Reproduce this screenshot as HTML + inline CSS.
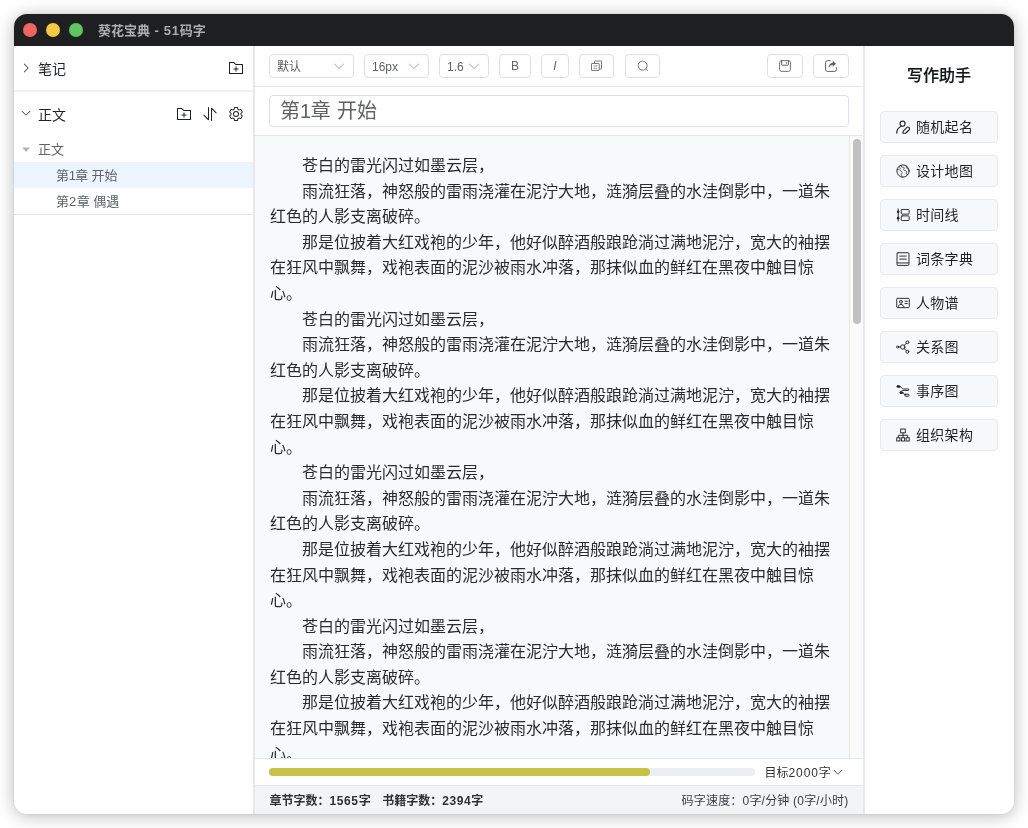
<!DOCTYPE html>
<html lang="zh-CN">
<head>
<meta charset="utf-8">
<title>葵花宝典 - 51码字</title>
<style>
*{box-sizing:border-box;margin:0;padding:0}
html,body{width:1028px;height:828px;background:#fff;overflow:hidden}
body{font-family:"Liberation Sans","Noto Sans CJK SC",sans-serif;position:relative;color:#303133;-webkit-font-smoothing:antialiased}
.win{position:absolute;left:14px;top:14px;width:1000px;height:800px;border-radius:13px;background:#fff;
 box-shadow:0 0 1px rgba(0,0,0,.3),0 2px 17px rgba(0,0,0,.28);}
.clip{position:absolute;inset:0;border-radius:13px;overflow:hidden;will-change:transform}
.titlebar{position:absolute;left:0;top:0;width:1000px;height:32px;background:#1d1f21}
.tl{position:absolute;top:9px;width:14px;height:14px;border-radius:50%}
.tl.r{left:9px;background:#ee6562}.tl.y{left:32px;background:#f4c942}.tl.g{left:55px;background:#60c461}
.wtitle{position:absolute;left:84px;top:0;height:32px;line-height:33px;font-size:13px;font-weight:700;color:#adadad;white-space:nowrap}
.wtitle i{font-style:normal;letter-spacing:0.75px}
/* sidebar */
.side{position:absolute;left:0;top:32px;width:239px;height:768px;background:#fff}
.sdiv{position:absolute;left:239px;top:32px;width:2px;height:768px;background:#e7e8ee}
.sec{position:absolute;left:0;width:239px;height:45px}
.sec .lbl{position:absolute;left:24px;top:1px;height:45px;line-height:45px;font-size:14px;color:#1f2225}
.hline{position:absolute;left:0;width:239px;height:2px;background:#eff0f5}
.ico{position:absolute;display:block}
.tree{position:absolute;left:0;top:90px;width:239px}
.trow{position:relative;height:26px;line-height:26px;font-size:13px;color:#606266;white-space:nowrap}
.trow.sel{background:#ecf5ff}
.trow i{font-style:normal}.trow{word-spacing:-0.3px}.d1{letter-spacing:-0.7px;margin-left:-0.4px}.d2{letter-spacing:0.6px}
/* editor */
.main{position:absolute;left:241px;top:32px;width:608px;height:768px;background:#fff}
.tbar{position:absolute;left:0;top:0;width:608px;height:41px;border-bottom:1px solid #e6e8f0}
.ctl{position:absolute;top:8px;height:24px;border:1px solid #dcdfe6;border-radius:4px;background:#fff;font-size:12px;color:#606266;line-height:22px}
.ctl span{position:absolute;left:7px;top:0.5px}
.titlebox{position:absolute;left:14px;top:49px;width:580px;height:32px;border:1px solid #dcdfe6;border-radius:4px;background:#fff;font-size:20px;line-height:31px;color:#606266;padding-left:10px;white-space:nowrap;word-spacing:0.6px}
.tline{position:absolute;left:0;top:89px;width:608px;height:1px;background:#e4e7ed}
.ed{position:absolute;left:0;top:90px;width:594px;height:622px;background:#f8f9fb;overflow:hidden}
.ed .txt{position:absolute;left:15px;top:17px;width:565px;font-size:16px;line-height:25.6px;color:#2a2b2e}
.ed p{text-indent:2em}
.sb{position:absolute;left:594px;top:90px;width:14px;height:622px;background:#fafafa;border-left:1px solid #e8e8e8}
.sb i{position:absolute;left:3px;top:3px;width:8px;height:185px;border-radius:4px;background:#c1c1c1}
.pline{position:absolute;left:0;top:712px;width:608px;height:1px;background:#e4e7ed}
.prog{position:absolute;left:14px;top:722px;width:486px;height:8px;border-radius:4px;background:#ebeef5}
.prog i{position:absolute;left:0;top:0;width:380.7px;height:8px;border-radius:4px;background:#c9c046}
.goal{position:absolute;left:509.5px;top:714px;height:27px;line-height:27px;font-size:12px;color:#303133;white-space:nowrap}
.status{position:absolute;left:0;top:739px;width:608px;height:29px;background:#f3f4f6;border-top:1px solid #e4e7ed;font-size:12px;line-height:30px;color:#303133;white-space:nowrap}
.status b{position:absolute;left:14.5px;top:0;font-weight:700}
.status span{position:absolute;right:14.5px;top:0;letter-spacing:0.2px;color:#3a3c40}
.status i{font-style:normal;letter-spacing:0.6px}.status u{display:inline-block;width:11.5px;text-decoration:none}
.mdiv{position:absolute;left:849px;top:32px;width:2px;height:768px;background:#e6e8ef}
/* right */
.right{position:absolute;left:851px;top:32px;width:149px;height:768px;background:#fff}
.right h3{position:absolute;left:-0.5px;top:18px;width:149px;text-align:center;font-size:16px;line-height:24px;font-weight:500;color:#141517;-webkit-text-stroke:0.2px #141517}
.rb{position:absolute;left:15px;width:118px;height:32px;border:1px solid #e7e9ee;border-radius:4px;background:#f7f8fa;font-size:14px;line-height:30px;color:#1f2225;white-space:nowrap}
.rb span{position:absolute;left:35px;top:0;letter-spacing:0.3px}
.rb svg{position:absolute;left:15px;top:8px}
</style>
</head>
<body>
<div class="win"><div class="clip">
 <div class="titlebar">
  <div class="tl r"></div><div class="tl y"></div><div class="tl g"></div>
  <div class="wtitle">葵花宝典<i> - 51</i>码字</div>
 </div>

 <div class="side">
  <div class="sec" style="top:0"><div class="lbl">笔记</div></div>
  <div class="hline" style="top:44px"></div>
  <div class="sec" style="top:46px"><div class="lbl">正文</div></div>
  <svg class="ico" style="left:6.2px;top:15.6px" width="12" height="12" viewBox="0 0 1024 1024"><path fill="#1f2225" d="M340.864 149.312a30.592 30.592 0 0 0 0 42.752L652.736 512 340.864 831.872a30.592 30.592 0 0 0 0 42.752 29.12 29.12 0 0 0 41.728 0L714.24 534.336a32 32 0 0 0 0-44.672L382.592 149.376a29.12 29.12 0 0 0-41.728 0z"/></svg>
  <svg class="ico" style="left:214px;top:14.2px" width="16" height="16" viewBox="0 0 1024 1024"><path fill="#1f2225" d="M128 192v640h768V320H485.76L357.504 192H128zm-32-64h287.872l128.384 128H928a32 32 0 0 1 32 32v576a32 32 0 0 1-32 32H96a32 32 0 0 1-32-32V160a32 32 0 0 1 32-32zm384 416V416h64v128h128v64H544v128h-64V608H352v-64h128z"/></svg>
  <svg class="ico" style="left:6px;top:61.4px" width="12" height="12" viewBox="0 0 1024 1024"><path fill="#1f2225" d="M831.872 340.864 512 652.672 192.128 340.864a30.592 30.592 0 0 0-42.752 0 29.12 29.12 0 0 0 0 41.6L489.664 714.24a32 32 0 0 0 44.672 0l340.288-331.712a29.12 29.12 0 0 0 0-41.728 30.592 30.592 0 0 0-42.752 0z"/></svg>
  <svg class="ico" style="left:162px;top:59.5px" width="16" height="16" viewBox="0 0 1024 1024"><path fill="#1f2225" d="M128 192v640h768V320H485.76L357.504 192H128zm-32-64h287.872l128.384 128H928a32 32 0 0 1 32 32v576a32 32 0 0 1-32 32H96a32 32 0 0 1-32-32V160a32 32 0 0 1 32-32zm384 416V416h64v128h128v64H544v128h-64V608H352v-64h128z"/></svg>
  <svg class="ico" style="left:188px;top:59.5px" width="16" height="16" viewBox="0 0 1024 1024"><path fill="#1f2225" d="M384 96a32 32 0 0 1 64 0v786.752a32 32 0 0 1-54.592 22.656L95.936 608a32 32 0 0 1 0-45.312h.128a32 32 0 0 1 45.184 0L384 805.632V96zm192 45.248a32 32 0 0 1 54.592-22.592L928.064 416a32 32 0 0 1 0 45.312h-.128a32 32 0 0 1-45.184 0L640 218.496V928a32 32 0 1 1-64 0V141.248z"/></svg>
  <svg class="ico" style="left:214px;top:59.5px" width="16" height="16" viewBox="0 0 1024 1024"><path fill="#1f2225" d="M600.704 64a32 32 0 0 1 30.464 22.208l35.2 109.376c14.784 7.232 28.928 15.36 42.432 24.512l112.384-24.192a32 32 0 0 1 34.432 15.36L944.32 364.8a32 32 0 0 1-4.032 37.504l-77.12 85.12a357.12 357.12 0 0 1 0 49.024l77.12 85.248a32 32 0 0 1 4.032 37.504l-88.704 153.6a32 32 0 0 1-34.432 15.296L708.8 803.904c-13.44 9.088-27.648 17.28-42.368 24.512l-35.264 109.376A32 32 0 0 1 600.704 960H423.296a32 32 0 0 1-30.464-22.208L357.696 828.48a351.616 351.616 0 0 1-42.56-24.64l-112.32 24.256a32 32 0 0 1-34.432-15.36L79.68 659.2a32 32 0 0 1 4.032-37.504l77.12-85.248a357.12 357.12 0 0 1 0-48.896l-77.12-85.248A32 32 0 0 1 79.68 364.8l88.704-153.6a32 32 0 0 1 34.432-15.296l112.32 24.256c13.568-9.152 27.776-17.408 42.56-24.64l35.2-109.312A32 32 0 0 1 423.232 64H600.64zm-23.424 64H446.72l-36.352 113.088-24.512 11.968a294.113 294.113 0 0 0-34.816 20.096l-22.656 15.36-116.224-25.088-65.28 113.152 79.68 88.192-1.92 27.136a293.12 293.12 0 0 0 0 40.192l1.92 27.136-79.808 88.192 65.344 113.152 116.224-25.024 22.656 15.296a294.113 294.113 0 0 0 34.816 20.096l24.512 11.968L446.72 896h130.688l36.48-113.152 24.448-11.904a288.282 288.282 0 0 0 34.752-20.096l22.592-15.296 116.288 25.024 65.28-113.152-79.744-88.192 1.92-27.136a293.12 293.12 0 0 0 0-40.256l-1.92-27.136 79.808-88.128-65.344-113.152-116.288 24.96-22.592-15.232a287.616 287.616 0 0 0-34.752-20.096l-24.448-11.904L577.344 128zM512 320a192 192 0 1 1 0 384 192 192 0 0 1 0-384zm0 64a128 128 0 1 0 0 256 128 128 0 0 0 0-256z"/></svg>
  <svg class="ico" style="left:5.8px;top:96.5px" width="12" height="12" viewBox="0 0 1024 1024"><path fill="#b0b3ba" d="m192 384 320 384 320-384z"/></svg>
  <div class="tree">
   <div class="trow"><span style="position:absolute;left:24px;top:1px">正文</span></div>
   <div class="trow sel"><span style="position:absolute;left:42px;top:1px">第<i class="d1">1</i>章 开始</span></div>
   <div class="trow"><span style="position:absolute;left:42px;top:1px">第<i class="d2">2</i>章 偶遇</span></div>
  </div>
  <div class="hline" style="top:168px;height:1px;background:#e5e7ec"></div>
 </div>
 <div class="sdiv"></div>

 <div class="main">
  <div class="tbar">
   <div class="ctl" style="left:14px;width:85px"><span>默认</span><svg class="ico" style="right:7px;top:3.5px" width="14" height="14" viewBox="0 0 1024 1024"><path fill="#a8abb2" d="M831.872 340.864 512 652.672 192.128 340.864a30.592 30.592 0 0 0-42.752 0 29.12 29.12 0 0 0 0 41.6L489.664 714.24a32 32 0 0 0 44.672 0l340.288-331.712a29.12 29.12 0 0 0 0-41.728 30.592 30.592 0 0 0-42.752 0z"/></svg></div>
   <div class="ctl" style="left:109px;width:65px"><span>16px</span><svg class="ico" style="right:7px;top:3.5px" width="14" height="14" viewBox="0 0 1024 1024"><path fill="#a8abb2" d="M831.872 340.864 512 652.672 192.128 340.864a30.592 30.592 0 0 0-42.752 0 29.12 29.12 0 0 0 0 41.6L489.664 714.24a32 32 0 0 0 44.672 0l340.288-331.712a29.12 29.12 0 0 0 0-41.728 30.592 30.592 0 0 0-42.752 0z"/></svg></div>
   <div class="ctl" style="left:184px;width:50px"><span>1.6</span><svg class="ico" style="right:7px;top:3.5px" width="14" height="14" viewBox="0 0 1024 1024"><path fill="#a8abb2" d="M831.872 340.864 512 652.672 192.128 340.864a30.592 30.592 0 0 0-42.752 0 29.12 29.12 0 0 0 0 41.6L489.664 714.24a32 32 0 0 0 44.672 0l340.288-331.712a29.12 29.12 0 0 0 0-41.728 30.592 30.592 0 0 0-42.752 0z"/></svg></div>
   <div class="ctl" style="left:244px;width:32px;text-align:center">B</div>
   <div class="ctl" style="left:286px;width:27.7px;text-align:center"><em>I</em></div>
   <div class="ctl" style="left:323.7px;width:35.6px"><svg class="ico" style="left:11.3px;top:5px" width="12" height="12" viewBox="0 0 12 12" fill="none" stroke="#606266" stroke-width="0.85" stroke-linejoin="round" stroke-linecap="butt"><rect x="0.5" y="3.5" width="7.7" height="7" rx="0.5"/><path d="M3.500 3.400V1.500a0.5 0.5 0 0 1 0.5-0.5H10a0.5 0.5 0 0 1 0.5 0.5V8.500a0.5 0.5 0 0 1-0.5 0.5H8.400"/><path d="M2.500 6h3.700M2.500 8.300h3.700" stroke-width="0.7"/></svg></div>
   <div class="ctl" style="left:369.6px;width:35.6px"><svg class="ico" style="left:11px;top:5px" width="12" height="12" viewBox="0 0 1024 1024"><path fill="#606266" d="m795.904 750.72 124.992 124.928a32 32 0 0 1-45.248 45.248L750.656 795.904a416 416 0 1 1 45.248-45.248zM480 832a352 352 0 1 0 0-704 352 352 0 0 0 0 704z"/></svg></div>
   <div class="ctl" style="left:512px;width:36px"><svg class="ico" style="left:11px;top:5px" width="12" height="12" viewBox="0 0 12 12" fill="none" stroke="#606266" stroke-width="1" stroke-linejoin="round" stroke-linecap="round"><rect x="0.6" y="0.6" width="10.8" height="10.8" rx="2" stroke-width="0.9"/><path d="M2.6 0.8V4.4a0.8 0.8 0 0 0 0.8 0.8H8.6a0.8 0.8 0 0 0 0.8-0.8V0.8"/><path d="M7.4 2.3v1.4" stroke-width="0.8"/></svg></div>
   <div class="ctl" style="left:558px;width:36px"><svg class="ico" style="left:11px;top:5px" width="12" height="12" viewBox="0 0 12 12" fill="none" stroke="#606266" stroke-width="1" stroke-linejoin="round" stroke-linecap="round"><path d="M5.2 0.7H2.4a1.8 1.8 0 0 0-1.8 1.8V9.6a1.8 1.8 0 0 0 1.8 1.8H9.6a1.8 1.8 0 0 0 1.8-1.8V7.6"/><path d="M8 1.400l2.900 2.400-2.900 2.400V4.800C6.300 4.800 4.800 5.600 3.800 7.200 4.100 4.700 5.700 3 8 2.800z" fill="#606266" stroke-width="0.5"/></svg></div>
  </div>
  <div class="titlebox">第<i style="font-style:normal;letter-spacing:-0.3px">1</i>章 开始</div>
  <div class="tline"></div>
  <div class="ed"><div class="txt">
<p>苍白的雷光闪过如墨云层，</p>
<p>雨流狂落，神怒般的雷雨浇灌在泥泞大地，涟漪层叠的水洼倒影中，一道朱红色的人影支离破碎。</p>
<p>那是位披着大红戏袍的少年，他好似醉酒般踉跄淌过满地泥泞，宽大的袖摆在狂风中飘舞，戏袍表面的泥沙被雨水冲落，那抹似血的鲜红在黑夜中触目惊心。</p>
<p>苍白的雷光闪过如墨云层，</p>
<p>雨流狂落，神怒般的雷雨浇灌在泥泞大地，涟漪层叠的水洼倒影中，一道朱红色的人影支离破碎。</p>
<p>那是位披着大红戏袍的少年，他好似醉酒般踉跄淌过满地泥泞，宽大的袖摆在狂风中飘舞，戏袍表面的泥沙被雨水冲落，那抹似血的鲜红在黑夜中触目惊心。</p>
<p>苍白的雷光闪过如墨云层，</p>
<p>雨流狂落，神怒般的雷雨浇灌在泥泞大地，涟漪层叠的水洼倒影中，一道朱红色的人影支离破碎。</p>
<p>那是位披着大红戏袍的少年，他好似醉酒般踉跄淌过满地泥泞，宽大的袖摆在狂风中飘舞，戏袍表面的泥沙被雨水冲落，那抹似血的鲜红在黑夜中触目惊心。</p>
<p>苍白的雷光闪过如墨云层，</p>
<p>雨流狂落，神怒般的雷雨浇灌在泥泞大地，涟漪层叠的水洼倒影中，一道朱红色的人影支离破碎。</p>
<p>那是位披着大红戏袍的少年，他好似醉酒般踉跄淌过满地泥泞，宽大的袖摆在狂风中飘舞，戏袍表面的泥沙被雨水冲落，那抹似血的鲜红在黑夜中触目惊心。</p>
  </div></div>
  <div class="sb"><i></i></div>
  <div class="pline"></div>
  <div class="prog"><i></i></div>
  <div class="goal">目标<i style="font-style:normal;letter-spacing:0.9px">2000</i>字<svg style="vertical-align:-0.5px;margin-left:1.5px" width="12" height="12" viewBox="0 0 1024 1024"><path fill="#303133" d="M831.872 340.864 512 652.672 192.128 340.864a30.592 30.592 0 0 0-42.752 0 29.12 29.12 0 0 0 0 41.6L489.664 714.24a32 32 0 0 0 44.672 0l340.288-331.712a29.12 29.12 0 0 0 0-41.728 30.592 30.592 0 0 0-42.752 0z"/></svg></div>
  <div class="status"><b>章节字数：<i>1565</i>字<u></u>书籍字数：<i>2394</i>字</b><span>码字速度：0字/分钟 (0字/小时)</span></div>
 </div>
 <div class="mdiv"></div>

 <div class="right">
  <h3>写作助手</h3>
  <div class="rb" style="top:65.3px"><svg width="14" height="14" viewBox="0 0 48 48" fill="none" stroke="#26282b" stroke-width="3.3" stroke-linecap="round" stroke-linejoin="round"><g stroke-width="4"><circle cx="22.600" cy="12.700" r="8.600"/><path d="M2.500 45C3 33 9 25 18 21.500"/><path d="M23.500 45.500l1.500-7.500L37.500 25.500c1.700-1.700 4.300-1.700 6 0l2 2c1.700 1.700 1.700 4.300 0 6L33 45.500z"/></g></svg><span>随机起名</span></div>
  <div class="rb" style="top:109.3px"><svg width="14" height="14" viewBox="0 0 48 48" fill="none" stroke="#26282b" stroke-width="3.3" stroke-linecap="round" stroke-linejoin="round"><circle cx="24" cy="24" r="21"/><g stroke-width="2.600"><path d="M5 18c4-1 7 1 9 4s7 3 7 7-4 4-3 8 4 4 3 8"/><path d="M17 5c-1 4 2 6 6 6s6 3 4 6 0 5 3 5 6 2 6 6-2 6 2 9"/><path d="M35 7c-2 3-1 6 2 7s5 3 6 6"/><path d="M13 12c2 1 3 3 2 5"/></g></svg><span>设计地图</span></div>
  <div class="rb" style="top:153.3px"><svg width="14" height="14" viewBox="0 0 48 48" fill="none" stroke="#26282b" stroke-width="3.3" stroke-linecap="round" stroke-linejoin="round"><path d="M7.500 3V45"/><circle cx="7.500" cy="13" r="4.600" fill="#26282b" stroke="none"/><circle cx="7.500" cy="35" r="4.600" fill="#26282b" stroke="none"/><rect x="18" y="5" width="27" height="16" rx="3"/><rect x="18" y="27" width="27" height="16" rx="3"/></svg><span>时间线</span></div>
  <div class="rb" style="top:197.3px"><svg width="14" height="14" viewBox="0 0 48 48" fill="none" stroke="#26282b" stroke-width="3.3" stroke-linecap="round" stroke-linejoin="round"><rect x="3.500" y="2.500" width="41" height="43.500" rx="3.500"/><path d="M5 37.500H43"/><path d="M13 14H35M13 24.500H35"/></svg><span>词条字典</span></div>
  <div class="rb" style="top:241.3px"><svg width="14" height="14" viewBox="0 0 48 48" fill="none" stroke="#26282b" stroke-width="3.3" stroke-linecap="round" stroke-linejoin="round"><rect x="2.500" y="8" width="43" height="32" rx="3"/><circle cx="17" cy="20" r="5"/><path d="M7 39c0-6 4-10 10-10s10 4 10 10"/><path d="M31 18h8M31 26h8"/></svg><span>人物谱</span></div>
  <div class="rb" style="top:285.3px"><svg width="14" height="14" viewBox="0 0 48 48" fill="none" stroke="#26282b" stroke-width="3.3" stroke-linecap="round" stroke-linejoin="round"><circle cx="23" cy="24" r="7.500"/><circle cx="5.500" cy="24" r="3.500"/><circle cx="39" cy="8" r="5"/><circle cx="39" cy="40" r="5"/><path d="M9 24H15.500M28 18.500l7.500-7M28 29.500l7.500 7"/></svg><span>关系图</span></div>
  <div class="rb" style="top:329.3px"><svg width="14" height="14" viewBox="0 0 48 48" fill="none" stroke="#26282b" stroke-width="3.3" stroke-linecap="round" stroke-linejoin="round"><rect x="3" y="6" width="11" height="5.500" rx="2.700" fill="#26282b"/><path d="M14 9c6 0 6 8 12 8H42c3 0 3 5 0 5H24c-4 0-6 2-6 5"/><rect x="13" y="27" width="11" height="5.500" rx="2.700" fill="#26282b"/><path d="M24 30c4 0 4 8 8 8"/><rect x="30" y="35" width="15" height="7" rx="3.500"/></svg><span>事序图</span></div>
  <div class="rb" style="top:373.3px"><svg width="14" height="14" viewBox="0 0 48 48" fill="none" stroke="#26282b" stroke-width="3.3" stroke-linecap="round" stroke-linejoin="round"><g stroke-linejoin="miter" stroke-linecap="butt"><rect x="16" y="3.500" width="16" height="13" /><rect x="2.500" y="33.500" width="11" height="11"/><rect x="18.500" y="33.500" width="11" height="11"/><rect x="34.500" y="33.500" width="11" height="11"/><path d="M24 16.500V33.500M8 33.500V25H40V33.500"/></g></svg><span>组织架构</span></div>
 </div>
</div></div>
</body>
</html>
